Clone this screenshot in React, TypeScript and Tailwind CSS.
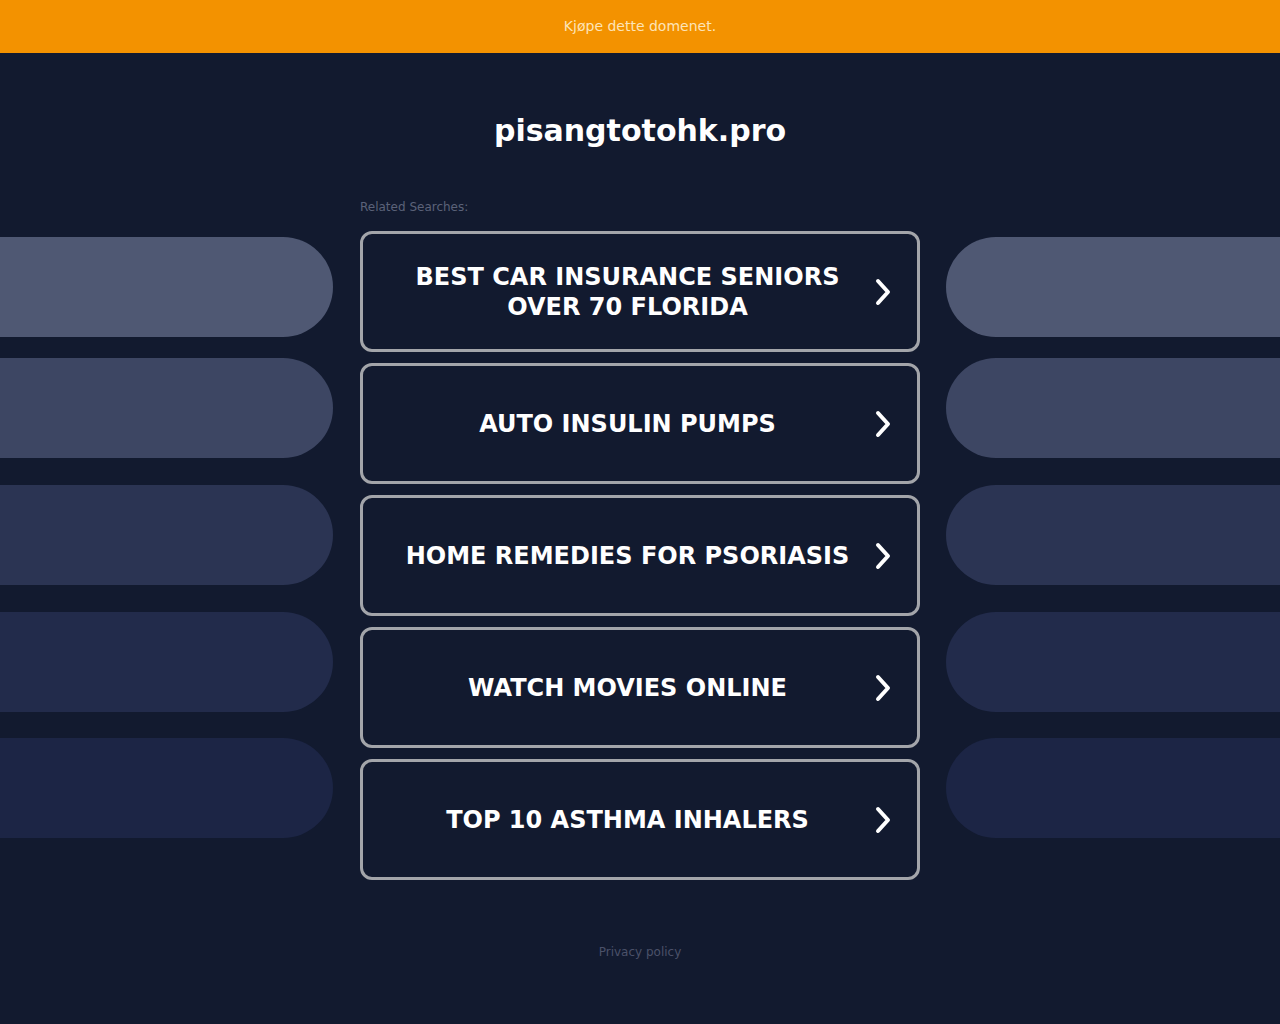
const searches = [
  "Best Car Insurance Seniors Over 70 Florida",
  "Auto Insulin Pumps",
  "Home Remedies For Psoriasis",
  "Watch Movies Online",
  "Top 10 Asthma Inhalers",
];

const pills = [
  { color: "bg-[#4f5873]", gap: "" },
  { color: "bg-[#3d4663]", gap: "mt-[21px]" },
  { color: "bg-[#2b3453]", gap: "mt-[27px]" },
  { color: "bg-[#222b4b]", gap: "mt-[27px]" },
  { color: "bg-[#1c2545]", gap: "mt-[26px]" },
];

function Chevron() {
  return (
    <svg width="16" height="28" viewBox="0 0 16 28" fill="none">
      <path
        d="M3 3 L13 14 L3 25"
        stroke="white"
        strokeWidth="4"
        strokeLinecap="round"
        strokeLinejoin="round"
      />
    </svg>
  );
}

function SideColumn({ side }: { side: "left" | "right" }) {
  return (
    <div
      className={`flex flex-col pt-[6px] ${
        side === "left" ? "w-[333px]" : "w-[334px]"
      }`}
    >
      {pills.map((p, i) => (
        <div
          key={i}
          className={`h-[100px] w-full ${p.color} ${p.gap} ${
            side === "left" ? "rounded-r-full" : "rounded-l-full"
          }`}
        />
      ))}
    </div>
  );
}

export default function App() {
  return (
    <div
      className="min-h-[1024px] bg-[#121a2f]"
      style={{ fontFamily: '"DejaVu Sans", sans-serif' }}
    >
      <div className="flex h-[53px] items-center justify-center bg-[#f39200] text-[14px] text-[#fde4b8]">
        Kjøpe dette domenet.
      </div>

      <h1 className="pt-[57px] text-center text-[30px] font-bold leading-[42px] text-white">
        pisangtotohk.pro
      </h1>

      <div className="mx-auto mt-[47px] w-[560px] text-[12px] leading-[16px] text-[#5b6279]">
        Related Searches:
      </div>

      <div className="mt-[16px] flex justify-between">
        <SideColumn side="left" />
        <div className="flex w-[560px] flex-col gap-[11px]">
          {searches.map((s) => (
            <a
              key={s}
              href="#"
              className="flex h-[121px] items-center rounded-[12px] border-[3px] border-[#a3a5aa] bg-[#121a2f] pl-[31px] pr-[26px]"
            >
              <span className="flex-1 text-center text-[24px] font-bold uppercase leading-[30px] text-white">
                {s}
              </span>
              <span className="ml-[13px] flex">
                <Chevron />
              </span>
            </a>
          ))}
        </div>
        <SideColumn side="right" />
      </div>

      <div className="mt-[63px] text-center text-[12px] text-[#4b5169]">
        Privacy policy
      </div>
    </div>
  );
}
